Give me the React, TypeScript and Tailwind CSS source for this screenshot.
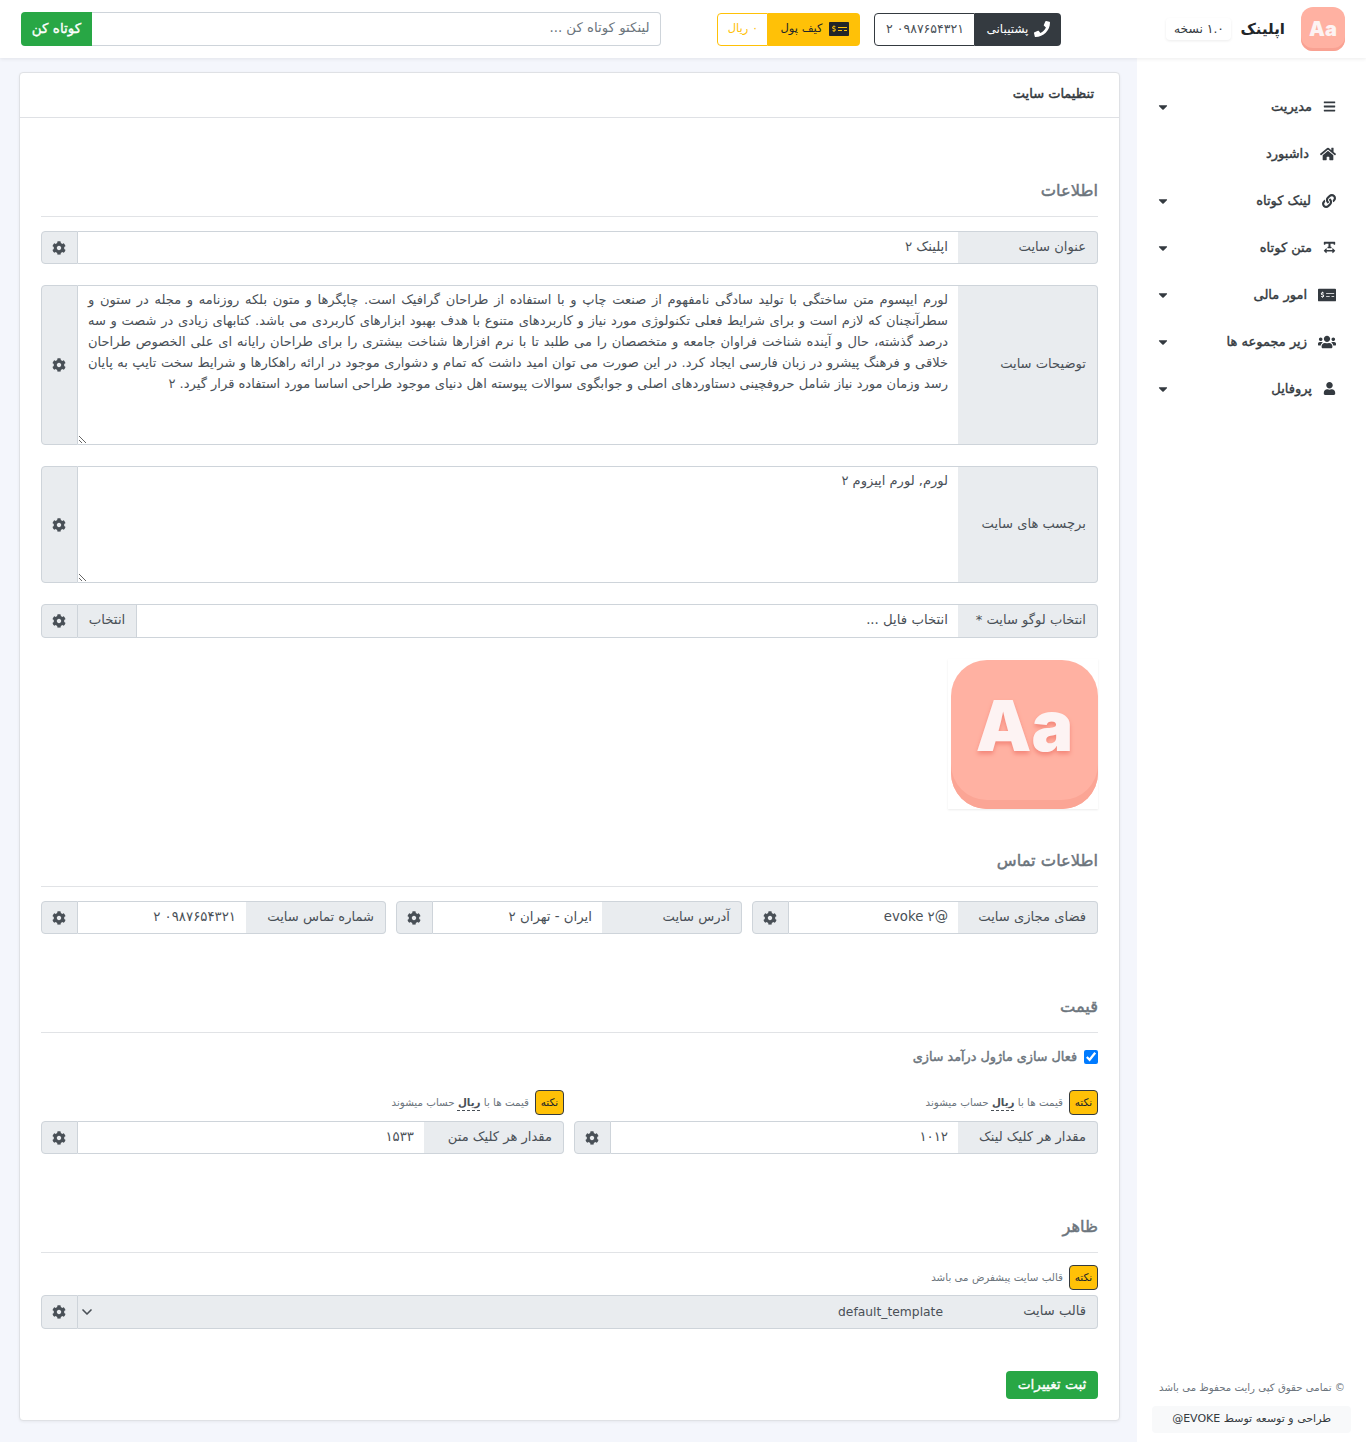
import { ChevronDown } from 'lucide-react'
import { FaBars, FaCaretDown, FaCog, FaHome, FaLink, FaMoneyCheckAlt, FaPhone, FaTextWidth, FaUser, FaUsers } from 'react-icons/fa'

const aboutText =
  'لورم ایپسوم متن ساختگی با تولید سادگی نامفهوم از صنعت چاپ و با استفاده از طراحان گرافیک است. چاپگرها و متون بلکه روزنامه و مجله در ستون و سطرآنچنان که لازم است و برای شرایط فعلی تکنولوژی مورد نیاز و کاربردهای متنوع با هدف بهبود ابزارهای کاربردی می باشد. کتابهای زیادی در شصت و سه درصد گذشته، حال و آینده شناخت فراوان جامعه و متخصصان را می طلبد تا با نرم افزارها شناخت بیشتری را برای طراحان رایانه ای علی الخصوص طراحان خلاقی و فرهنگ پیشرو در زبان فارسی ایجاد کرد. در این صورت می توان امید داشت که تمام و دشواری موجود در ارائه راهکارها و شرایط سخت تایپ به پایان رسد وزمان مورد نیاز شامل حروفچینی دستاوردهای اصلی و جوابگوی سوالات پیوسته اهل دنیای موجود طراحی اساسا مورد استفاده قرار گیرد. ۲'

const menu = [
  { label: 'مدیریت', icon: <FaBars className="w-[13px] h-[13px]" />, caret: true },
  { label: 'داشبورد', icon: <FaHome className="w-4 h-4" />, caret: false },
  { label: 'لینک کوتاه', icon: <FaLink className="w-[14px] h-[14px]" />, caret: true },
  { label: 'متن کوتاه', icon: <FaTextWidth className="w-[13px] h-[13px]" />, caret: true },
  { label: 'امور مالی', icon: <FaMoneyCheckAlt className="w-[18px] h-[18px]" />, caret: true },
  { label: 'زیر مجموعه ها', icon: <FaUsers className="w-[18px] h-[18px]" />, caret: true },
  { label: 'پروفایل', icon: <FaUser className="w-[13px] h-[13px]" />, caret: true },
]

function SettingBtn() {
  return (
    <div className="w-[37px] shrink-0 flex items-center justify-center pl-0 pr-[1px] bg-[#e9ecef] border border-[#ced4da] rounded-l-[4px] text-[#495057]">
      <FaCog className="w-[14px] h-[14px]" />
    </div>
  )
}

function Label({ children }: { children: string }) {
  return (
    <div className="w-[140px] shrink-0 flex items-center px-[11px] pb-[2px] bg-[#e9ecef] border border-[#ced4da] border-l-0 rounded-r-[4px] text-[13.1px] text-[#495057]">
      {children}
    </div>
  )
}

function Field({ label, value }: { label: string; value: string }) {
  return (
    <div className="flex h-[33px]">
      <Label>{label}</Label>
      <input
        readOnly
        value={value}
        className="flex-1 min-w-0 px-[10px] pb-[2px] bg-white border-y border-[#ced4da] text-[13.3px] text-[#495057] outline-none"
      />
      <SettingBtn />
    </div>
  )
}

function Section({ title, className }: { title: string; className: string }) {
  return (
    <div className={`${className} h-[40px] border-b border-[#e1e3e6]`}>
      <h5 className="text-[16.3px] leading-[28px] font-normal [-webkit-text-stroke:0.45px] text-[#6c757d]">{title}</h5>
    </div>
  )
}

function Note({ children }: { children: React.ReactNode }) {
  return (
    <div className="flex items-center gap-[6px] h-[25px]">
      <span className="w-[29px] h-[25px] flex items-center justify-center bg-[#ffc107] border border-[#343a40] rounded-[4px] text-[10.5px] text-[#212529]">
        نکته
      </span>
      <span className="text-[10.3px] text-[#6c757d]">{children}</span>
    </div>
  )
}

function PriceNote() {
  return (
    <Note>
      قیمت ها با <b className="underline decoration-dashed underline-offset-4 text-[#495057]">ریال</b> حساب میشوند
    </Note>
  )
}

export default function App() {
  return (
    <div dir="rtl" className="min-h-[1442px] flex flex-col bg-[#f4f6fc] font-['DejaVu_Sans',sans-serif]">
      {/* Top bar */}
      <header className="h-[58px] shrink-0 flex items-center px-[21px] bg-white shadow-[0_1px_4px_rgba(0,0,0,0.08)] z-10">
        <div className="w-[44px] h-[44px] flex items-center justify-center rounded-[12px] bg-[#ffb1a2] shadow-[inset_0_-3px_0_#f9a192]">
          <span className="font-['Inter',sans-serif] font-black text-[20px] text-[#fdf3f3]">Aa</span>
        </div>
        <span className="mr-4 text-[15px] font-bold text-[#212529]">اپلینک</span>
        <span className="mr-[9px] w-[65px] h-[22px] flex items-center justify-center bg-white rounded-[4px] shadow-[0_1px_3px_rgba(0,0,0,0.08)] text-[12.3px] text-[#343a40]">
          ۱.۰ نسخه
        </span>

        <div className="mr-[105px] flex h-[33px] w-[187px]">
          <div className="w-[86px] flex items-center justify-center gap-[6px] bg-[#343a40] rounded-r-[4px] text-[12px] text-white">
            <FaPhone className="w-4 h-4" />
            پشتیبانی
          </div>
          <div className="flex-1 flex items-center justify-center bg-white border border-[#343a40] rounded-l-[4px] text-[12.5px] text-[#495057]">
            ۰۹۸۷۶۵۴۳۲۱ ۲
          </div>
        </div>

        <div className="mr-[14px] flex h-[33px] w-[143px]">
          <div className="w-[92px] flex items-center justify-center gap-[6px] bg-[#ffc107] rounded-r-[4px] text-[11.5px] text-[#212529]">
            <FaMoneyCheckAlt className="w-5 h-5" />
            کیف پول
          </div>
          <div className="flex-1 flex items-center justify-center bg-white border border-[#ffc107] rounded-l-[4px] text-[11.5px] text-[#ffc107]">
            ۰ ریال
          </div>
        </div>

        <div className="mr-[56px] flex flex-1 h-[34px]">
          <input
            readOnly
            placeholder="لینکتو کوتاه کن ..."
            className="flex-1 min-w-0 px-[11px] pb-[2px] bg-white border border-l-0 border-[#ced4da] rounded-r-[4px] text-[13.3px] outline-none placeholder:text-[#6c757d]"
          />
          <button className="w-[71px] pb-[2px] bg-[#28a745] rounded-l-[4px] text-[13.5px] [-webkit-text-stroke:0.35px] text-white">کوتاه کن</button>
        </div>
      </header>

      <div className="flex flex-1">
        {/* Sidebar */}
        <aside className="w-[229px] shrink-0 flex flex-col justify-between bg-white pt-[25px] pb-[10px] pr-[30px]">
          <nav className="flex flex-col">
            {menu.map((item) => (
              <div key={item.label} className="h-[47px] flex items-center justify-between pl-[21px]">
                <div className="flex items-center gap-[11px] text-[13px] [-webkit-text-stroke:0.4px] text-[#343a40]">
                  <span className="text-[#343a40] [-webkit-text-stroke:0px]">{item.icon}</span>
                  {item.label}
                </div>
                {item.caret && <FaCaretDown className="w-[10px] h-[14px] text-[#343a40]" />}
              </div>
            ))}
          </nav>
          <div className="-mr-[15px] ml-[15px]">
            <p className="text-[10.2px] pr-[6px] text-[#6c757d]">© تمامی حقوق کپی رایت محفوظ می باشد</p>
            <div className="mt-[11px] h-[27px] flex items-center px-[20px] bg-[#f8f9fa] rounded-[4px] text-[11px] text-[#343a40]">
              طراحی و توسعه توسط EVOKE@
            </div>
          </div>
        </aside>

        {/* Main card */}
        <main className="flex-1 min-w-0 pt-[14px] pr-[17px] pl-[19px] pb-[22px]">
          <div className="h-[1349px] bg-white border border-[#dfe1e5] rounded-[4px] shadow-[0_1px_3px_rgba(0,0,0,0.06)]">
            <div className="h-[45px] flex items-center pr-[25px] pb-[2px] border-b border-[#dfe1e5]">
              <h4 className="text-[13px] [-webkit-text-stroke:0.45px] text-[#343a40]">تنظیمات سایت</h4>
            </div>

            <div className="pr-[21px] pl-[21px]">
              <Section title="اطلاعات" className="mt-[59px]" />

              <div className="mt-[14px]">
                <Field label="عنوان سایت" value="اپلینک ۲" />
              </div>

              <div className="mt-[21px] flex h-[160px]">
                <Label>توضیحات سایت</Label>
                <textarea
                  readOnly
                  value={aboutText}
                  className="flex-1 min-w-0 px-[10px] py-[3px] bg-white border-y border-[#ced4da] text-[13.05px] leading-[21px] text-justify text-[#495057] outline-none resize-y"
                />
                <SettingBtn />
              </div>

              <div className="mt-[21px] flex h-[117px]">
                <Label>برچسب های سایت</Label>
                <textarea
                  readOnly
                  value="لورم, لورم اپیزوم ۲"
                  className="flex-1 min-w-0 px-[10px] py-[3px] bg-white border-y border-[#ced4da] text-[13.05px] leading-[21px] text-[#495057] outline-none resize-y"
                />
                <SettingBtn />
              </div>

              <div className="mt-[21px] flex h-[34px]">
                <Label>انتخاب لوگو سایت *</Label>
                <div className="flex-1 flex items-center px-[10px] pb-[2px] bg-white border-y border-[#ced4da] text-[13.3px] text-[#495057]">
                  انتخاب فایل ...
                </div>
                <div className="w-[59px] flex items-center justify-center pb-[2px] bg-[#e9ecef] border-y border-r border-[#ced4da] text-[13.3px] text-[#495057]">
                  انتخاب
                </div>
                <SettingBtn />
              </div>

              <div className="mt-[21px] w-[150px] h-[150px] pr-0 pl-[3px] pt-[1px] bg-white shadow-[0_1px_2px_rgba(0,0,0,0.08)]">
                <div className="w-full h-full flex items-center justify-center pb-[18px] rounded-[36px] bg-[#ffb1a2] shadow-[inset_0_-9px_0_#fba595]">
                  <span className="font-['Inter',sans-serif] font-black text-[70px] text-[#fdf3f3] [text-shadow:0_3px_4px_#f4877a]">Aa</span>
                </div>
              </div>

              <Section title="اطلاعات تماس" className="mt-[38px]" />

              <div className="mt-[14px] grid grid-cols-[346px_346px_345px] gap-[10px]">
                <Field label="فضای مجازی سایت" value="@evoke ۲" />
                <Field label="آدرس سایت" value="ایران - تهران ۲" />
                <Field label="شماره تماس سایت" value="۰۹۸۷۶۵۴۳۲۱ ۲" />
              </div>

              <Section title="قیمت" className="mt-[59px]" />

              <label className="mt-[14px] flex items-center gap-[7px] h-[20px] text-[12.75px] [-webkit-text-stroke:0.45px] text-[#6c757d]">
                <input type="checkbox" readOnly checked className="w-[14px] h-[14px] accent-[#007bff]" />
                فعال سازی ماژول درآمد سازی
              </label>

              <div className="mt-[23px] grid grid-cols-[524px_523px] gap-[10px]">
                <div className="flex flex-col gap-[6px]">
                  <PriceNote />
                  <Field label="مقدار هر کلیک لینک" value="۱۰۱۲" />
                </div>
                <div className="flex flex-col gap-[6px]">
                  <PriceNote />
                  <Field label="مقدار هر کلیک متن" value="۱۵۳۳" />
                </div>
              </div>

              <Section title="ظاهر" className="mt-[59px]" />

              <div className="mt-[12px]">
                <Note>قالب سایت پیشفرض می باشد</Note>
              </div>

              <div className="mt-[5px] flex h-[34px]">
                <Label>قالب سایت</Label>
                <div className="flex-1 flex items-center justify-between pr-[15px] pl-[1px] bg-[#e9ecef] border-y border-[#ced4da] text-[12.3px] text-[#495057]">
                  <span>default_template</span>
                  <ChevronDown className="w-4 h-4" strokeWidth={2.5} />
                </div>
                <SettingBtn />
              </div>

              <div className="mt-[42px] flex justify-start">
                <button className="w-[92px] h-[28px] pb-[2px] bg-[#28a745] rounded-[4px] text-[13.7px] [-webkit-text-stroke:0.35px] text-white">ثبت تغییرات</button>
              </div>
            </div>
          </div>
        </main>
      </div>
    </div>
  )
}
